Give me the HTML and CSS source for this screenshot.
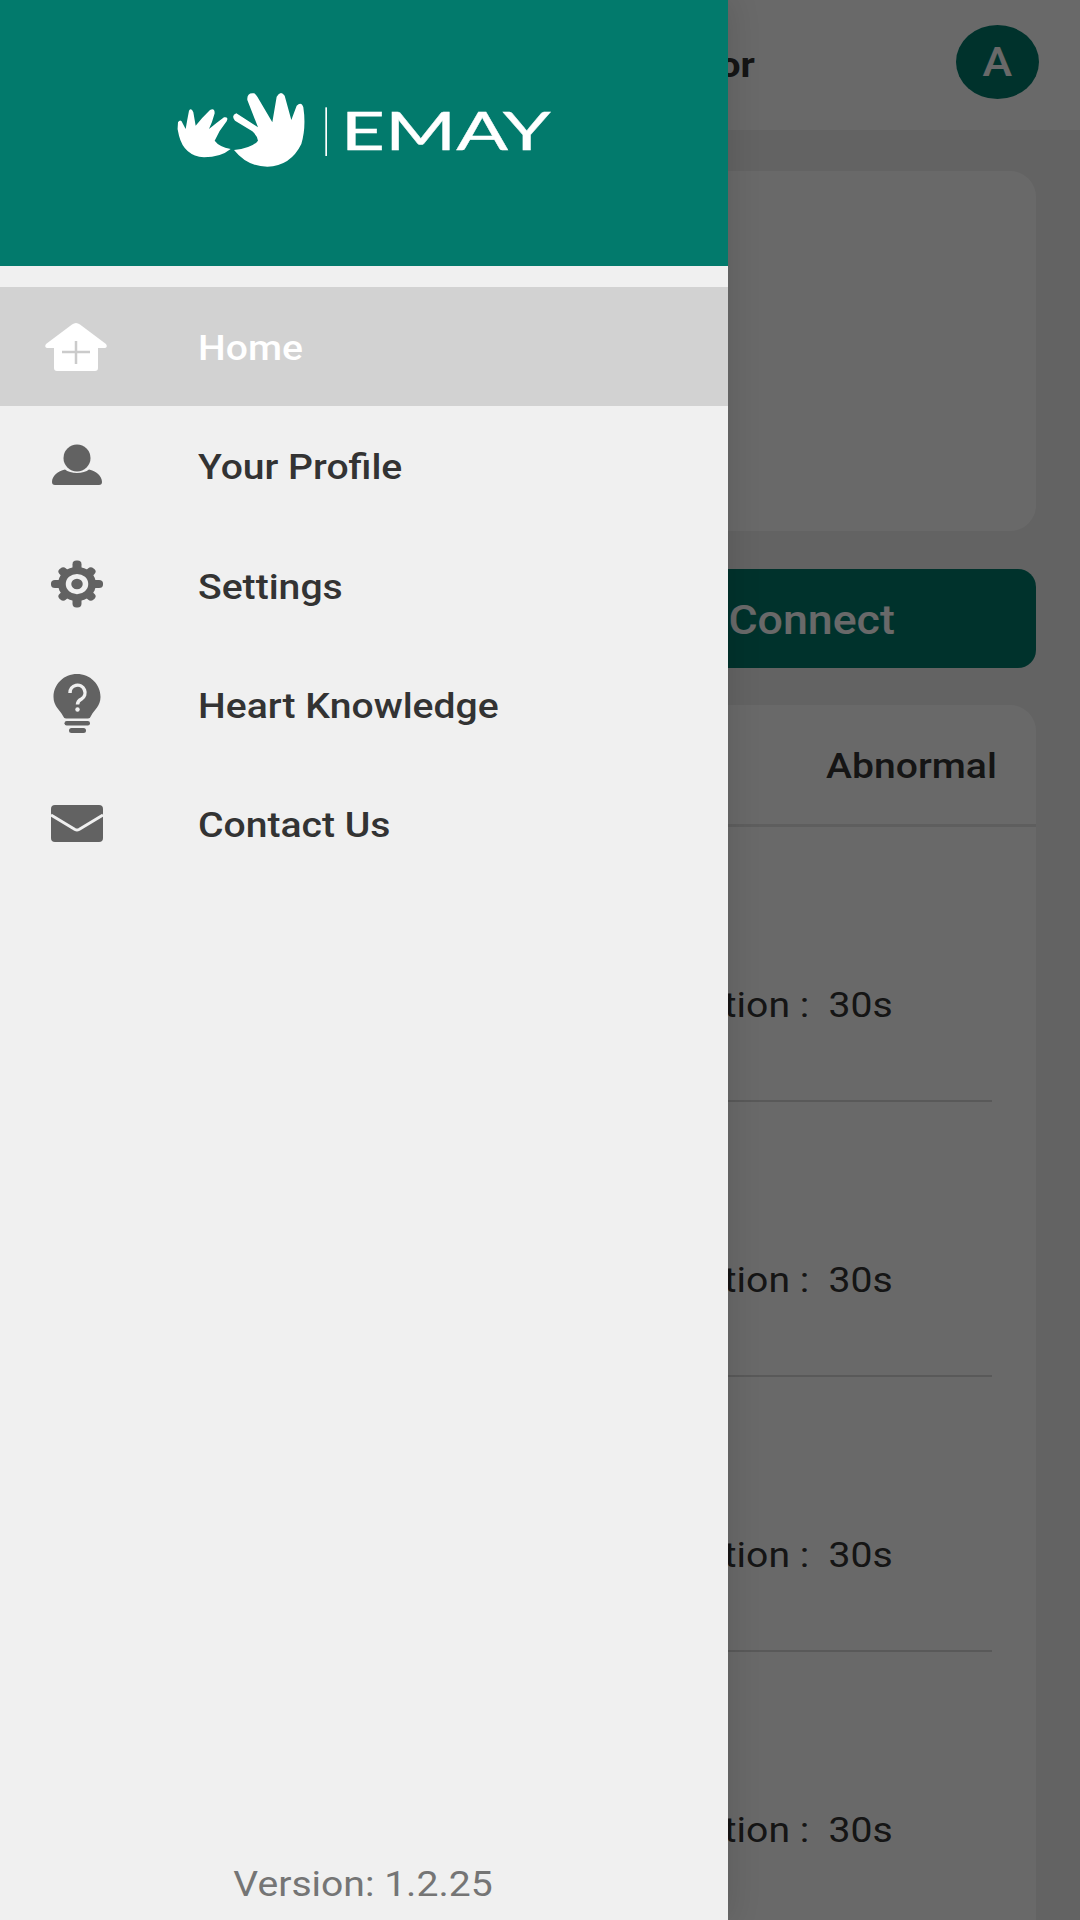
FILE: index.html
```html
<!DOCTYPE html>
<html lang="en">
<head>
    <meta charset="UTF-8">
    <meta name="viewport" content="width=device-width, initial-scale=1.0">
    <title>Emay</title>
    <link rel="stylesheet" href="styles.css">
</head>
<body>
    <div class="page">
        <div class="topbar">
            <div class="topbar-title">Heart Monitor</div>
            <div class="avatar"><span>A</span></div>
        </div>
        <div class="content">
            <div class="card"></div>
            <div class="connect-btn"><span>Bluetooth Connect</span></div>
            <div class="records">
                <div class="records-head">
                    <span>Abnormal</span>
                </div>
                <div class="record"><span>Duration :  30s</span></div>
                <div class="record"><span>Duration :  30s</span></div>
                <div class="record"><span>Duration :  30s</span></div>
                <div class="record"><span>Duration :  30s</span></div>
            </div>
        </div>
    </div>

    <div class="scrim"></div>

    <div class="drawer">
        <div class="drawer-header">
            <svg class="logo" viewBox="100 85 1140 240">
                <path fill="#fff" d="M112 185 Q120 172 127 190 L135 205 Q140 175 145 150 Q152 140 158 155 L165 195 Q185 170 208 148 Q222 140 222 158 Q215 185 205 205 Q230 185 250 170 Q265 168 258 182 Q235 210 222 240 Q235 258 270 265 Q240 290 190 290 Q130 285 115 225 Q108 205 112 185 Z"/>
                <path fill="#fff" d="M280 268 Q335 262 352 240 Q350 225 335 212 L283 180 Q270 165 287 158 L345 195 L352 200 L320 118 Q318 95 340 98 Q345 100 350 108 L395 185 L408 108 Q420 88 432 105 L452 178 L468 135 Q482 122 488 140 Q497 200 482 250 Q450 316 380 318 Q320 318 280 268 Z"/>
                <rect fill="#fff" x="554" y="140" width="5" height="146"/>
                <text class="logo-text" x="600" y="267" textLength="630" lengthAdjust="spacingAndGlyphs">EMAY</text>
            </svg>
        </div>
        <div class="menu">
            <div class="menu-item active">
                <svg class="menu-icon" viewBox="0 0 64 64">
                    <path fill="#fff" d="M27 9.500 Q31 6.500 35 9.500 L61 29 Q63 32 60 33 H53 V53 Q53 56 50 56 H12 Q9 56 9 53 V33 H2 Q-1 32 1 29 Z"/>
                    <path fill="none" stroke="#cbcbcb" stroke-width="2.500" d="M17 37 H45 M31 26 V49"/>
                </svg>
                <span>Home</span>
            </div>
            <div class="menu-item">
                <svg class="menu-icon" viewBox="0 0 64 64">
                    <circle fill="#626262" cx="32" cy="24" r="13.500"/>
                    <path fill="#626262" d="M7 48 C7 42 13 37 20 35.500 C25 40 39 40 44 35.500 C51 37 57 42 57 48 Q57 51 54 51 H10 Q7 51 7 48 Z"/>
                </svg>
                <span>Your Profile</span>
            </div>
            <div class="menu-item">
                <svg class="menu-icon" viewBox="0 0 64 64">
                    <g transform="translate(32 31) scale(1 0.9) translate(-32 -32)">
                        <g fill="#626262">
                            <circle cx="32" cy="32" r="19"/>
                            <rect x="27.500" y="6" width="9" height="52" rx="4"/>
                            <rect x="27.500" y="8" width="9" height="48" rx="4" transform="rotate(45 32 32)"/>
                            <rect x="27.500" y="6" width="9" height="52" rx="4" transform="rotate(90 32 32)"/>
                            <rect x="27.500" y="8" width="9" height="48" rx="4" transform="rotate(135 32 32)"/>
                        </g>
                        <circle fill="#626262" stroke="#f0f0f0" stroke-width="5.500" cx="32" cy="32" r="8.500"/>
                    </g>
                </svg>
                <span>Settings</span>
            </div>
            <div class="menu-item">
                <svg class="menu-icon" viewBox="0 0 64 64">
                    <path fill="#626262" d="M32 1 C45 1 55.500 11 55.500 24 C55.500 33 49 37 46 43 Q45 45.500 43 45.500 H21 Q19 45.500 18 43 C15 37 8.500 33 8.500 24 C8.500 11 19 1 32 1 Z"/>
                    <rect fill="#626262" x="19.500" y="48" width="25.500" height="4.500" rx="2.200"/>
                    <rect fill="#626262" x="24" y="55" width="17" height="5" rx="2.500"/>
                    <path fill="none" stroke="#f0f0f0" stroke-width="3.500" d="M25 20 A7.500 7.500 0 1 1 36.500 26 Q32.500 28 32.500 31.500"/>
                    <circle fill="#f0f0f0" cx="32.500" cy="36.500" r="2.200"/>
                </svg>
                <span>Heart Knowledge</span>
            </div>
            <div class="menu-item">
                <svg class="menu-icon" viewBox="0 0 64 64">
                    <rect fill="#626262" x="6" y="13" width="52" height="37" rx="4"/>
                    <path fill="none" stroke="#f0f0f0" stroke-width="3" d="M6 23 L30 37.500 Q32 38.500 34 37.500 L58 23"/>
                </svg>
                <span>Contact Us</span>
            </div>
        </div>
        <div class="version">Version: 1.2.25</div>
    </div>
</body>
</html>
```

FILE: styles.css
```css
html, body {
    margin: 0;
    height: 100%;
    overflow: hidden;
}
body {
    position: relative;
    font-family: Roboto, "Noto Sans", sans-serif;
    background-color: #f0f0f0;
}
/* the app's text is a little wider than the font, same as the avatar */
.topbar-title, .avatar span, .connect-btn span, .records-head span, .record span, .menu-item span, .version {
    display: inline-block;
    transform: scaleX(1.117);
}
.page {
    height: 1920px;
    overflow: hidden;
}
.topbar {
    height: 130px;
    background-color: white;
    display: flex;
    align-items: center;
    justify-content: flex-end;
    padding-right: 41px;
    box-sizing: border-box;
}
.topbar-title {
    font-size: 35px;
    font-weight: 700;
    color: #333;
    margin-right: 201px;
    transform-origin: right center;
}
.avatar {
    width: 83px;
    height: 74px;
    border-radius: 50%;
    background-color: #027a6c;
    color: white;
    font-size: 40px;
    font-weight: 500;
    line-height: 76px;
    text-align: center;
    margin-top: -6px;
}
.content {
    padding: 41px 44px 0;
}
.card {
    height: 360px;
    background-color: white;
    border-radius: 26px;
}
.connect-btn {
    height: 99px;
    margin-top: 38px;
    background-color: #027a6c;
    color: white;
    border-radius: 18px;
    font-size: 40px;
    font-weight: 500;
    display: flex;
    align-items: center;
    justify-content: flex-end;
    padding-right: 141px;
    padding-top: 4px;
    box-sizing: border-box;
}
.connect-btn span {
    transform-origin: right center;
}
.records {
    margin-top: 37px;
    background-color: white;
    border-radius: 26px 26px 0 0;
}
.records-head {
    height: 122px;
    border-bottom: 3px solid #e4e4e4;
    display: flex;
    align-items: center;
    justify-content: flex-end;
    padding-right: 39px;
    padding-top: 4px;
    box-sizing: border-box;
    font-size: 35px;
    font-weight: 500;
    color: #333;
}
.records-head span {
    transform-origin: right center;
}
.record {
    height: 273px;
    margin: 0 44px;
    border-bottom: 2px solid #d8d8d8;
    display: flex;
    align-items: flex-end;
    justify-content: flex-end;
    padding-right: 99px;
    font-size: 35px;
    color: #333;
    white-space: pre;
}
.record span {
    margin-bottom: 74px;
    transform-origin: right center;
}
.scrim {
    position: absolute;
    top: 0;
    left: 0;
    width: 100%;
    height: 100%;
    background-color: rgba(0, 0, 0, 0.59);
}
.drawer {
    position: absolute;
    top: 0;
    left: 0;
    bottom: 0;
    width: 728px;
    background-color: #f0f0f0;
    display: flex;
    flex-direction: column;
    box-shadow: 2px 0 30px rgba(0, 0, 0, 0.12);
}
.drawer-header {
    height: 266px;
    flex-shrink: 0;
    background-color: #027a6c;
    display: flex;
    align-items: center;
    justify-content: center;
    padding-bottom: 9px;
    box-sizing: border-box;
}
.logo {
    width: 380px;
    height: 80px;
}
.logo-text {
    font-family: Lato, sans-serif;
    font-size: 158px;
    fill: white;
    stroke: white;
    stroke-width: 1px;
}
.menu {
    margin-top: 21px;
}
.menu-item {
    height: 119.300px;
    display: flex;
    align-items: center;
    padding-left: 45px;
    font-size: 35px;
    font-weight: 500;
    color: #333;
}
.menu-item span {
    transform-origin: left center;
    padding-top: 4px;
}
.menu-item.active {
    background-color: #d2d2d2;
    color: white;
}
.menu-icon {
    width: 64px;
    height: 64px;
    margin-right: 89px;
    overflow: visible;
    flex-shrink: 0;
}
.version {
    margin-top: auto;
    margin-right: 2px;
    text-align: center;
    font-size: 35px;
    color: #757575;
    padding-bottom: 15px;
}
```
